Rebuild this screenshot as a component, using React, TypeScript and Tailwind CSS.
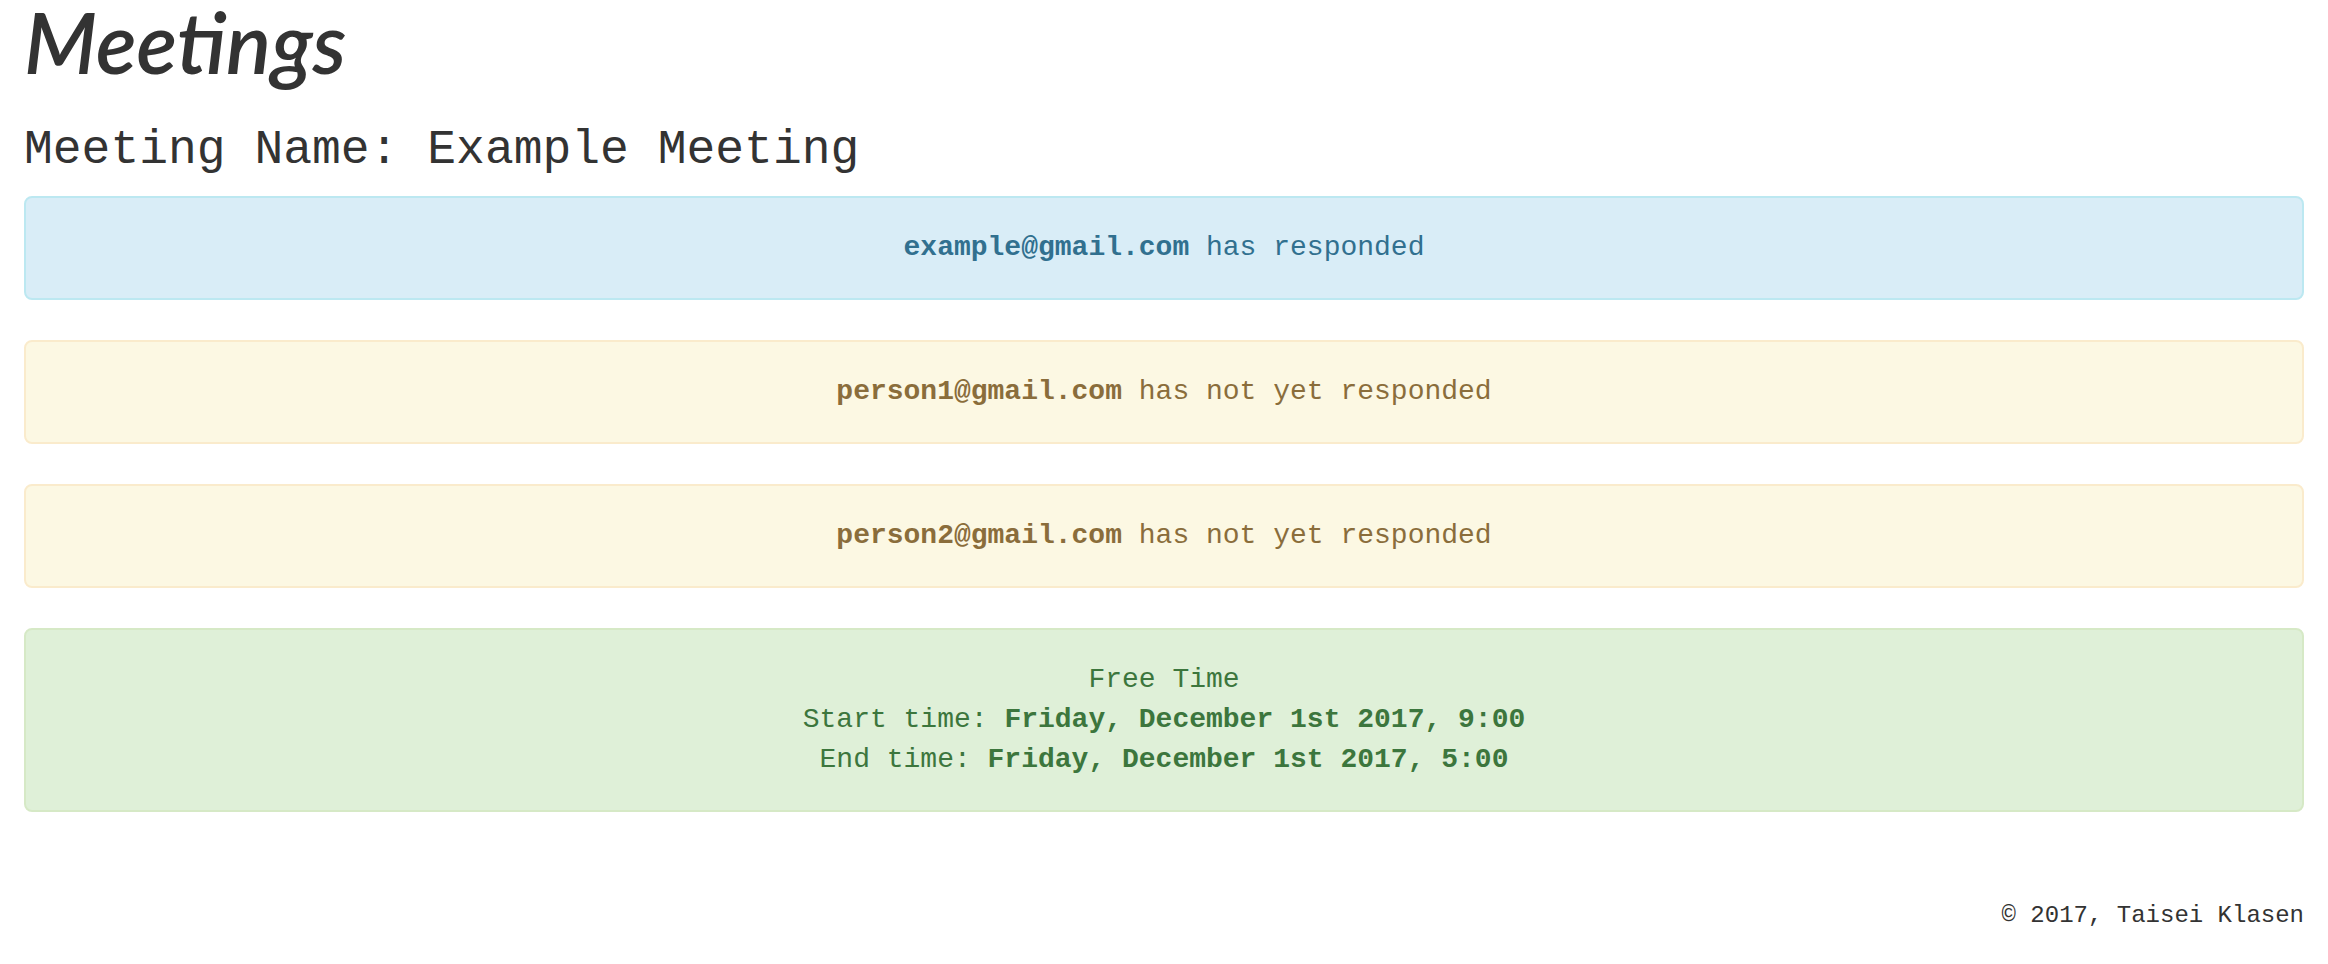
import React from "react";

const mono = { fontFamily: '"Liberation Mono", "Courier New", monospace' };

function Alert({
  tone,
  children,
}: {
  tone: "info" | "warning" | "success";
  children: React.ReactNode;
}) {
  const cls =
    tone === "info"
      ? "bg-[#d9edf7] border-[#bce8f1] text-[#31708f]"
      : tone === "warning"
      ? "bg-[#fcf8e3] border-[#faebcc] text-[#8a6d3b]"
      : "bg-[#dff0d8] border-[#d6e9c6] text-[#3c763d]";
  return (
    <div
      className={`border-2 border-solid rounded-[8px] p-[30px] text-center text-[28px] leading-[40px] ${cls}`}
    >
      {children}
    </div>
  );
}

export default function App() {
  return (
    <div className="min-h-[964px] bg-white text-[#333333] px-[24px] flex flex-col" style={mono}>
      <h1
        className="text-[84px] leading-[84px] italic font-semibold m-0 text-[#333333]"
        style={{ fontFamily: 'Lato, "Open Sans", sans-serif' }}
      >
        Meetings
      </h1>
      <h3 className="text-[48px] leading-[53px] font-normal mt-[40px] mb-[19px]">
        Meeting Name: Example Meeting
      </h3>
      <div className="flex flex-col gap-[40px]">
        <Alert tone="info">
          <b>example@gmail.com</b> has responded
        </Alert>
        <Alert tone="warning">
          <b>person1@gmail.com</b> has not yet responded
        </Alert>
        <Alert tone="warning">
          <b>person2@gmail.com</b> has not yet responded
        </Alert>
        <Alert tone="success">
          <div>Free Time</div>
          <div>
            Start time: <b>Friday, December 1st 2017, 9:00</b>
          </div>
          <div>
            End time: <b>Friday, December 1st 2017, 5:00</b>
          </div>
        </Alert>
      </div>
      <footer className="mt-[87px] text-right text-[24px] leading-[34px]">
        © 2017, Taisei Klasen
      </footer>
    </div>
  );
}
